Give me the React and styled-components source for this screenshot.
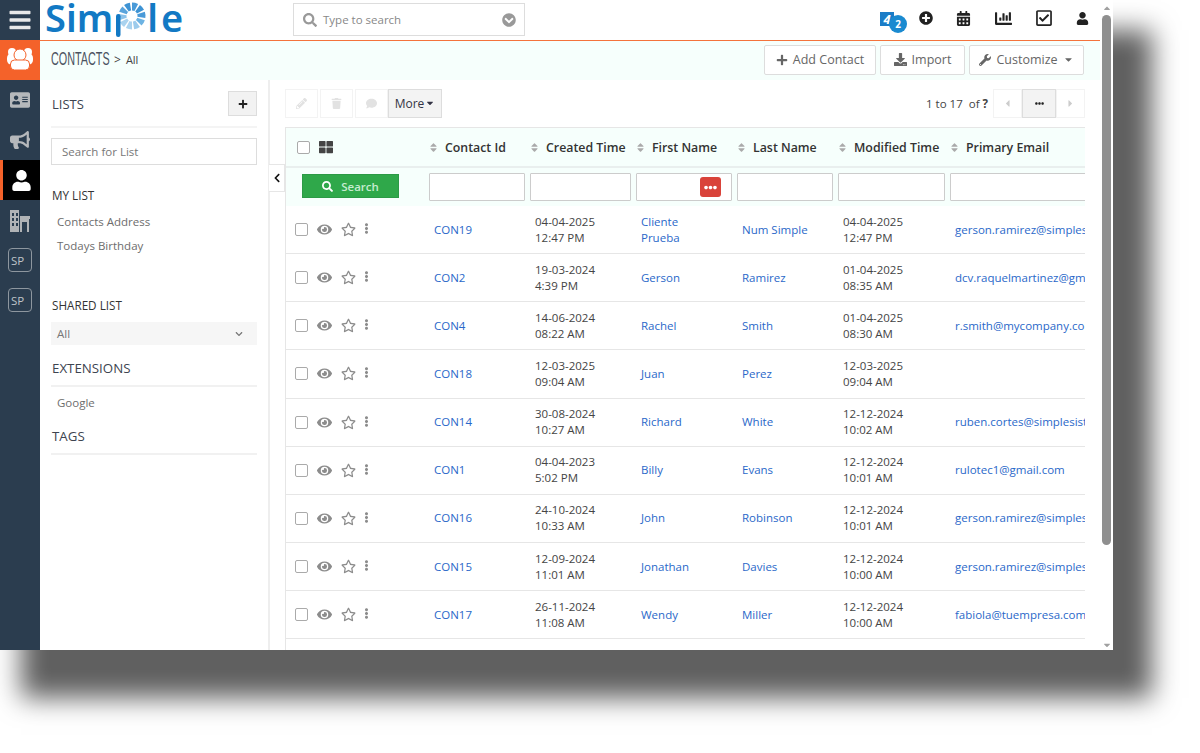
import React from 'react';
import styled, { createGlobalStyle } from 'styled-components';
import {
  FaBars, FaAddressCard, FaBullhorn, FaUser, FaSearch, FaChevronCircleDown,
  FaPlusCircle, FaCalendarAlt, FaChartBar, FaRegCheckSquare, FaPlus, FaDownload, FaWrench,
  FaPencilAlt, FaTrash, FaComment, FaEye, FaRegStar, FaEllipsisV, FaEllipsisH, FaCaretLeft,
  FaCaretRight, FaCaretDown, FaCaretUp, FaChevronLeft, FaChevronDown, FaThLarge, FaSort,
} from 'react-icons/fa';

const GlobalStyle = createGlobalStyle`
  html, body, #root { margin: 0; padding: 0; height: 753px; background: #fff; }
  body { font-family: "Open Sans", "Liberation Sans", sans-serif; font-size: 11.5px; color: #444; overflow: hidden; }
  * { box-sizing: border-box; }
`;

const Frame = styled.div`
  display: flex;
  width: 1113px;
  height: 650px;
  background: #fff;
  box-shadow: 30px 39px 25px 9px #606060;
  overflow: hidden;
`;

const Sidebar = styled.nav`
  width: 40px;
  flex: none;
  background: #2b3d4f;
  display: flex;
  flex-direction: column;
`;

const SideItem = styled.div`
  height: 40px;
  display: flex;
  align-items: center;
  justify-content: center;
  color: ${p => (p.$active ? '#fff' : p.$orange ? '#fff' : '#b5b8bb')};
  background: ${p => (p.$active ? '#000' : p.$orange ? '#f4622a' : 'transparent')};
  border-left: ${p => (p.$active ? '3px solid #f4622a' : 'none')};
  font-size: ${p => p.$size || 20}px;
`;

const SpBadge = styled.span`
  width: 24px;
  height: 24px;
  border: 1px solid #8e979f;
  border-radius: 4px;
  font-size: 11.5px;
  color: #bfc4c8;
  display: flex;
  align-items: center;
  padding-left: 2px;
`;

const Main = styled.div`
  flex: 1;
  min-width: 0;
  display: flex;
  flex-direction: column;
`;

const Header = styled.header`
  height: 41px;
  flex: none;
  border-bottom: 1px solid #f4733c;
  display: flex;
  align-items: flex-start;
`;

const Logo = styled.div`
  width: 253px;
  padding-left: 5px;
  display: flex;
  height: 38px;
  color: #1279c4;
  font-family: "Noto Sans", "Open Sans", sans-serif;
  font-size: 38px;
  line-height: 38px;
  font-weight: 600;
`;

const LogoText = styled.span`
  display: block;
  margin-top: -2px;
  letter-spacing: ${p => p.$spacing || 0}px;
`;

const WheelBox = styled.svg`
  width: 31px;
  height: 38px;
  margin: 0 0 0 3px;
  flex: none;
`;

const SearchBox = styled.div`
  margin-top: 3px;
  width: 232px;
  height: 33px;
  border: 1px solid #ddd;
  display: flex;
  align-items: center;
  padding: 0 8px 0 9px;
  color: #999;
  gap: 6px;
  font-size: 11.5px;
`;

const SearchText = styled.span`
  flex: 1;
  color: #888;
`;

const TopIcons = styled.div`
  margin-left: auto;
  padding-right: 1px;
  display: flex;
  align-items: center;
  height: 36px;
  color: #222;
  font-size: 15px;
`;

const TopIcon = styled.span`
  width: ${p => p.$w || 40}px;
  display: flex;
  justify-content: center;
`;

const NotifyBox = styled.div`
  position: relative;
  width: 14px;
  height: 14px;
  margin-right: 15px;
  margin-top: 1px;
  background: #1a7cc7;
  color: #fff;
  font-weight: 700;
  font-style: italic;
  font-size: 13px;
  line-height: 14px;
  text-align: center;
`;

const NotifyCount = styled.span`
  position: absolute;
  left: 9px;
  top: 3px;
  width: 18px;
  height: 18px;
  border-radius: 50%;
  background: #1a8ad0;
  font-size: 10px;
  font-style: normal;
  line-height: 18px;
`;

const Crumb = styled.div`
  height: 39px;
  flex: none;
  background: #f6fffc;
  display: flex;
  align-items: center;
  padding: 0 16px 2px 11px;
  font-size: 12px;
`;

const CrumbTitle = styled.span`
  display: inline-block;
  width: 58px;
  margin-right: 5px;
  font-family: "Liberation Sans", sans-serif;
  font-size: 18px;
  color: #4a5260;
  white-space: nowrap;
  transform: scaleX(0.6);
  transform-origin: left center;
`;

const CrumbRest = styled.span`
  font-size: 11px;
  color: #444;
  margin-left: 5px;
`;

const CrumbActions = styled.div`
  margin-left: auto;
  display: flex;
  gap: 4px;
`;

const ActionButton = styled.button`
  height: 30px;
  width: ${p => p.$w}px;
  border: 1px solid #ddd;
  border-radius: 2px;
  background: #fff;
  color: #666;
  font: inherit;
  font-size: 12.5px;
  display: flex;
  align-items: center;
  justify-content: center;
  gap: 5px;
  padding: 0;
`;

const Body = styled.div`
  flex: 1;
  min-height: 0;
  display: flex;
  position: relative;
`;

const ListPanel = styled.aside`
  width: 230px;
  flex: none;
  border-right: 2px solid #eee;
  padding: 0 11px;
`;

const ListHead = styled.div`
  height: 48px;
  border-bottom: 2px solid #f4f4f4;
  display: flex;
  align-items: flex-start;
  justify-content: space-between;
  padding-top: 11px;
  font-size: 13px;
  color: #3d4450;
`;

const ListTitle = styled.span`
  padding-top: 4px;
  padding-left: 1px;
`;

const SquareButton = styled.button`
  width: 29px;
  height: 25px;
  border: 1px solid #ddd;
  background: #f2f2f2;
  color: #222;
  font-size: 10px;
  padding: 0;
  display: flex;
  align-items: center;
  justify-content: center;
`;

const ListSearch = styled.div`
  height: 27px;
  margin-top: 10px;
  border: 1px solid #ddd;
  color: #777;
  font-size: 11.5px;
  line-height: 25px;
  padding-left: 10px;
`;

const ListLabel = styled.div`
  margin-top: ${p => p.$top}px;
  padding-left: 1px;
  font-size: 11.7px;
  line-height: 16px;
  color: #333;
`;

const ListLink = styled.div`
  margin-top: ${p => p.$top}px;
  padding-left: 6px;
  font-size: 11.5px;
  line-height: 16px;
  color: #6d6d6d;
`;

const SharedSelect = styled.div`
  height: 23px;
  margin-top: 9px;
  background: #f6f6f6;
  color: #777;
  display: flex;
  align-items: center;
  justify-content: space-between;
  padding: 0 14px 0 6px;
  font-size: 11.5px;
`;

const SectionTitle = styled.div`
  margin-top: ${p => p.$top}px;
  height: ${p => p.$h}px;
  border-bottom: 2px solid #f1f1f1;
  font-size: 13.3px;
  line-height: 18px;
  color: #3d4450;
  padding-left: 1px;
`;

const CollapseTab = styled.div`
  position: absolute;
  left: 229px;
  top: 84px;
  width: 16px;
  height: 28px;
  background: #fff;
  border: 1px solid #e6e6e6;
  border-left: none;
  color: #111;
  font-size: 10px;
  display: flex;
  align-items: center;
  justify-content: center;
  z-index: 2;
`;

const Content = styled.section`
  flex: 1;
  min-width: 0;
  display: flex;
  flex-direction: column;
  padding: 8px 15px 0 15px;
`;

const Toolbar = styled.div`
  height: 30px;
  flex: none;
  display: flex;
  align-items: center;
  gap: 2px;
  margin-bottom: 9px;
`;

const ToolButton = styled.span`
  width: 33px;
  height: 29px;
  border: 1px solid #f3f3f3;
  color: #e2e2e2;
  font-size: 11px;
  display: flex;
  align-items: center;
  justify-content: center;
`;

const MoreButton = styled.button`
  width: 54px;
  height: 29px;
  margin-left: -2px;
  border: 1px solid #ddd;
  background: #f3f3f3;
  color: #334;
  font: inherit;
  font-size: 12px;
  display: flex;
  align-items: center;
  justify-content: center;
  gap: 1px;
  padding: 0;
`;

const Pager = styled.div`
  margin-left: auto;
  display: flex;
  align-items: center;
  color: #444;
  font-size: 11.5px;
`;

const PagerText = styled.span`
  margin-right: 5px;
`;

const PagerButton = styled.span`
  width: ${p => (p.$active ? 34 : 29)}px;
  height: 29px;
  border: 1px solid ${p => (p.$active ? '#ddd' : '#f3f3f3')};
  background: ${p => (p.$active ? '#f3f3f3' : '#fff')};
  color: ${p => (p.$active ? '#222' : '#ccc')};
  font-size: ${p => (p.$active ? 9 : 11)}px;
  display: flex;
  align-items: center;
  justify-content: center;
`;

const TableWrap = styled.div`
  flex: 1;
  min-height: 0;
  border-top: 1px solid #e6e6e6;
  border-left: 1px solid #e6e6e6;
  overflow: hidden;
`;

const Grid = styled.div`
  display: grid;
  grid-template-columns: 141px 101px 106px 101px 101px 112px 240px;
  width: 902px;
`;

const HeadCell = styled.div`
  height: 40px;
  background: #f6fffc;
  border-bottom: 2px solid #e9efee;
  display: flex;
  align-items: center;
  padding-left: 1px;
  gap: 5px;
  font-size: 12.35px;
  font-weight: 600;
  color: #333;
`;

const SortIcon = styled.span`
  color: #aaa;
  font-size: 11px;
  display: flex;
  margin-right: 1px;
`;

const SelectHead = styled(HeadCell)`
  padding-left: 11px;
  gap: 9px;
  color: #444;
  font-size: 14px;
`;

const FilterCell = styled.div`
  height: 38px;
  background: #f6fffc;
  padding: 5px 3px 0 2px;
  position: relative;
`;

const FilterInput = styled.input`
  width: 100%;
  height: 28px;
  border: 1px solid #ccc;
  border-radius: 1px;
  background: #fff;
  display: block;
`;

const SearchCell = styled(FilterCell)`
  padding: 6px 0 0 16px;
`;

const SearchButton = styled.button`
  width: 97px;
  height: 24px;
  border: 1px solid #2c9a46;
  background: #2fa84a;
  color: #c5ecd0;
  font: inherit;
  font-size: 11.5px;
  font-weight: 600;
  display: flex;
  align-items: center;
  justify-content: center;
  gap: 8px;
  padding: 0;
`;

const DotsBadge = styled.span`
  position: absolute;
  right: 14px;
  top: 9px;
  width: 21px;
  height: 20px;
  border-radius: 3px;
  background: #d9433a;
  color: #fff;
  font-size: 13px;
  display: flex;
  align-items: center;
  justify-content: center;
`;

const Cell = styled.div`
  height: 48.15px;
  border-bottom: 1px solid #e6e6e6;
  display: flex;
  align-items: center;
  padding: 0 ${p => (p.$wrap ? 20 : 0)}px 0 7px;
  font-size: 11.5px;
  line-height: 16px;
  color: ${p => (p.$link ? '#2a68c9' : '#444')};
  white-space: ${p => (p.$wrap ? 'normal' : 'nowrap')};
  overflow: hidden;
`;

const RowTools = styled(Cell)`
  padding-left: 9px;
  color: #8c8c8c;
  font-size: 15px;
  gap: 9px;
`;

const Check = styled.span`
  width: 13px;
  height: 13px;
  border: 1px solid #aaa;
  border-radius: 2px;
  background: #fff;
  flex: none;
`;

const Kebab = styled.span`
  font-size: 11px;
  display: flex;
  margin-top: -2px;
  margin-left: -4px;
`;

const Scrollbar = styled.div`
  width: 13px;
  flex: none;
  background: #fff;
  display: flex;
  flex-direction: column;
  align-items: center;
  color: #a0a0a0;
  font-size: 10px;
`;

const ScrollThumb = styled.div`
  width: 9px;
  height: 530px;
  margin-top: 2px;
  border-radius: 5px;
  background: #8f8f8f;
`;

const ArrowDown = styled.span`
  margin-top: auto;
  display: flex;
`;

const ArrowUp = styled.span`
  margin-top: 3px;
  display: flex;
`;

const columns = ['Contact Id', 'Created Time', 'First Name', 'Last Name', 'Modified Time', 'Primary Email'];

const rows = [
  ['CON19', '04-04-2025', '12:47 PM', 'Cliente Prueba', 'Num Simple', '04-04-2025', '12:47 PM', 'gerson.ramirez@simplesistemas.com'],
  ['CON2', '19-03-2024', '4:39 PM', 'Gerson', 'Ramirez', '01-04-2025', '08:35 AM', 'dcv.raquelmartinez@gmail.com'],
  ['CON4', '14-06-2024', '08:22 AM', 'Rachel', 'Smith', '01-04-2025', '08:30 AM', 'r.smith@mycompany.com'],
  ['CON18', '12-03-2025', '09:04 AM', 'Juan', 'Perez', '12-03-2025', '09:04 AM', ''],
  ['CON14', '30-08-2024', '10:27 AM', 'Richard', 'White', '12-12-2024', '10:02 AM', 'ruben.cortes@simplesistemas.com'],
  ['CON1', '04-04-2023', '5:02 PM', 'Billy', 'Evans', '12-12-2024', '10:01 AM', 'rulotec1@gmail.com'],
  ['CON16', '24-10-2024', '10:33 AM', 'John', 'Robinson', '12-12-2024', '10:01 AM', 'gerson.ramirez@simplesistemas.com'],
  ['CON15', '12-09-2024', '11:01 AM', 'Jonathan', 'Davies', '12-12-2024', '10:00 AM', 'gerson.ramirez@simplesistemas.com'],
  ['CON17', '26-11-2024', '11:08 AM', 'Wendy', 'Miller', '12-12-2024', '10:00 AM', 'fabiola@tuempresa.com'],
];

const wheelColors = ['#4a9ad8', '#3d93d4', '#4a9ad8', '#6db3e3', '#9ccbec', '#aad3ef', '#aad3ef', '#8cc2e9', '#5aa4dc', '#3d93d4'];

const Wheel = () => (
  <WheelBox viewBox="0 0 31 38">
    {wheelColors.map((color, i) => (
      <circle key={i} cx="16" cy="16" r="9.5" fill="none" stroke={color} strokeWidth="8" pathLength="100" strokeDasharray="7.5 92.5" transform={`rotate(${i * 36 - 90} 16 16)`} />
    ))}
    <rect x="0" y="14" width="4.5" height="23" rx="2.2" fill="#1279c4" />
  </WheelBox>
);

const UsersIcon = () => (
  <svg width="40" height="40" viewBox="0 0 40 40" fill="#fff">
    <circle cx="12" cy="12" r="4" />
    <circle cx="28" cy="12" r="4" />
    <rect x="7" y="13" width="26" height="12" rx="5" />
    <circle cx="20" cy="15" r="6" stroke="#f4622a" strokeWidth="1" />
    <rect x="10.5" y="20" width="19" height="10" rx="4" stroke="#f4622a" strokeWidth="1" />
  </svg>
);

const BuildingIcon = () => (
  <svg width="40" height="40" viewBox="0 0 40 40">
    <path fill="#b0b3b6" d="M10 10h9v22h-9zM20 16h10v3h-1v13h-2V22h-5v10h-2z" />
    <path fill="#2b3d4f" d="M12 13h2v3h-2zM16 13h2v3h-2zM12 18h2v3h-2zM16 18h2v3h-2zM12 23h2v3h-2zM16 23h2v3h-2z" />
  </svg>
);

const DateCell = ({ date, time }) => (
  <Cell $wrap>
    <div>
      {date}
      <br />
      {time}
    </div>
  </Cell>
);

export default function App() {
  return (
    <>
      <GlobalStyle />
      <Frame>
        <Sidebar>
          <SideItem $size={24}><FaBars color="#e8e8e8" /></SideItem>
          <SideItem $orange><UsersIcon /></SideItem>
          <SideItem><FaAddressCard /></SideItem>
          <SideItem><FaBullhorn /></SideItem>
          <SideItem $active $size={21}><FaUser /></SideItem>
          <SideItem><BuildingIcon /></SideItem>
          <SideItem><SpBadge>SP</SpBadge></SideItem>
          <SideItem><SpBadge>SP</SpBadge></SideItem>
        </Sidebar>
        <Main>
          <Header>
            <Logo>
              <LogoText>Sim</LogoText>
              <Wheel />
              <LogoText $spacing={3}>le</LogoText>
            </Logo>
            <SearchBox>
              <FaSearch size={14} />
              <SearchText>Type to search</SearchText>
              <FaChevronCircleDown size={14} />
            </SearchBox>
            <TopIcons>
              <NotifyBox>
                4
                <NotifyCount>2</NotifyCount>
              </NotifyBox>
              <TopIcon $w={34}><FaPlusCircle size={14} /></TopIcon>
              <TopIcon><FaCalendarAlt /></TopIcon>
              <TopIcon><FaChartBar size={17} /></TopIcon>
              <TopIcon $w={42}><FaRegCheckSquare size={18} /></TopIcon>
              <TopIcon $w={34}><FaUser size={13} /></TopIcon>
            </TopIcons>
          </Header>
          <Crumb>
            <CrumbTitle>CONTACTS</CrumbTitle>
            &gt;
            <CrumbRest>All</CrumbRest>
            <CrumbActions>
              <ActionButton $w={112}><FaPlus size={12} /> Add Contact</ActionButton>
              <ActionButton $w={85}><FaDownload size={13} /> Import</ActionButton>
              <ActionButton $w={115}><FaWrench size={12} /> Customize <FaCaretDown size={11} /></ActionButton>
            </CrumbActions>
          </Crumb>
          <Body>
            <ListPanel>
              <ListHead>
                <ListTitle>LISTS</ListTitle>
                <SquareButton><FaPlus /></SquareButton>
              </ListHead>
              <ListSearch>Search for List</ListSearch>
              <ListLabel $top={22}>MY LIST</ListLabel>
              <ListLink $top={11}>Contacts Address</ListLink>
              <ListLink $top={8}>Todays Birthday</ListLink>
              <ListLabel $top={43}>SHARED LIST</ListLabel>
              <SharedSelect>All <FaChevronDown size={8} /></SharedSelect>
              <SectionTitle $top={14} $h={28}>EXTENSIONS</SectionTitle>
              <ListLink $top={8}>Google</ListLink>
              <SectionTitle $top={16} $h={28}>TAGS</SectionTitle>
            </ListPanel>
            <CollapseTab><FaChevronLeft /></CollapseTab>
            <Content>
              <Toolbar>
                <ToolButton><FaPencilAlt /></ToolButton>
                <ToolButton><FaTrash /></ToolButton>
                <ToolButton><FaComment /></ToolButton>
                <MoreButton>More <FaCaretDown size={10} /></MoreButton>
                <Pager>
                  <PagerText>1 to 17 &nbsp;of <b>?</b></PagerText>
                  <PagerButton><FaCaretLeft /></PagerButton>
                  <PagerButton $active><FaEllipsisH /></PagerButton>
                  <PagerButton><FaCaretRight /></PagerButton>
                </Pager>
              </Toolbar>
              <TableWrap>
                <Grid>
                  <SelectHead><Check /><FaThLarge /></SelectHead>
                  {columns.map(c => (
                    <HeadCell key={c}><SortIcon><FaSort /></SortIcon>{c}</HeadCell>
                  ))}
                  <SearchCell>
                    <SearchButton><FaSearch size={11} color="#fff" /> Search</SearchButton>
                  </SearchCell>
                  {columns.map((c, i) => (
                    <FilterCell key={c}>
                      <FilterInput aria-label={c} />
                      {i === 2 && <DotsBadge><FaEllipsisH /></DotsBadge>}
                    </FilterCell>
                  ))}
                  {rows.map(r => (
                    <React.Fragment key={r[0]}>
                      <RowTools>
                        <Check />
                        <FaEye />
                        <FaRegStar />
                        <Kebab><FaEllipsisV /></Kebab>
                      </RowTools>
                      <Cell $link>{r[0]}</Cell>
                      <DateCell date={r[1]} time={r[2]} />
                      <Cell $link $wrap>{r[3]}</Cell>
                      <Cell $link>{r[4]}</Cell>
                      <DateCell date={r[5]} time={r[6]} />
                      <Cell $link>{r[7]}</Cell>
                    </React.Fragment>
                  ))}
                </Grid>
              </TableWrap>
            </Content>
          </Body>
        </Main>
        <Scrollbar>
          <ArrowUp><FaCaretUp /></ArrowUp>
          <ScrollThumb />
          <ArrowDown><FaCaretDown /></ArrowDown>
        </Scrollbar>
      </Frame>
    </>
  );
}
